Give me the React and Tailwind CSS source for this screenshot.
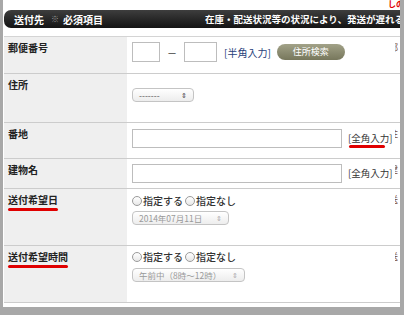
const jp = { fontFamily: '"Noto Sans CJK JP", "Noto Sans", sans-serif' };

function Radio({ label }) {
  return (
    <span className="flex items-center gap-[1px] whitespace-nowrap">
      <span className="inline-block w-[10px] h-[10px] rounded-full border border-[#9a9a9a] bg-gradient-to-b from-white to-[#e8e8e8]" />
      <span className="text-[10px] text-[#333] font-medium">{label}</span>
    </span>
  );
}

function Select({ width, children, muted }) {
  return (
    <div
      className={`flex items-center justify-between h-[14px] px-[6px] rounded-[4px] border border-[#c4c4c4] bg-gradient-to-b from-white to-[#ededed] whitespace-nowrap ${width}`}
    >
      <span className={`text-[8.5px] leading-none ${muted ? 'text-[#9a9a9a]' : 'text-[#555]'}`}>{children}</span>
      <span className={`text-[7px] leading-none ${muted ? 'text-[#aaa]' : 'text-[#444]'}`}>⇕</span>
    </div>
  );
}

function Edge({ ch }) {
  return (
    <div className="w-[5px] shrink-0 overflow-hidden pt-[6px]">
      <span className="block text-[9px] leading-[10px] text-[#7a4a30] -ml-[6px]">{ch}</span>
    </div>
  );
}

function Row({ label, underline, h, children, edge }) {
  return (
    <div className={`flex border-b border-[#cccccc] ${h}`}>
      <div className="w-[123px] shrink-0 bg-[#efefef] pl-[4px] pt-[5px]">
        <span className="block text-[10px] leading-[12px] text-[#222] font-semibold">{label}</span>
        {underline && <div className={`mt-[2px] h-[3px] rounded-full bg-[#e00000] ${underline}`} />}
      </div>
      <div className="flex-1 min-w-0 overflow-hidden pl-[5px]">{children}</div>
      <Edge ch={edge} />
    </div>
  );
}

export default function App() {
  return (
    <div className="w-[404px] h-[315px] bg-[#a8a8a8] pl-[3px] pr-[4px] pb-[8px] overflow-hidden" style={jp}>
      <div className="h-full bg-white overflow-hidden">
        <div className="flex justify-end h-[10px] overflow-hidden">
          <span className="text-[8px] leading-[8px] text-[#e00000] font-bold -mr-[4px] whitespace-nowrap">しの</span>
        </div>

        {/* header bar */}
        <div className="flex items-center h-[18px] rounded-l-[7px] bg-gradient-to-b from-[#3e3e3e] to-[#141414] ml-[1px] whitespace-nowrap overflow-hidden">
          <span className="pl-[10px] text-[10px] font-bold text-white">送付先</span>
          <span className="ml-[7px] text-[8px] text-[#9a9a9a]">※</span>
          <span className="ml-[4px] text-[10px] font-bold text-white">必須項目</span>
          <span className="ml-[102px] text-[9.5px] font-bold text-white">在庫・配送状況等の状況により、発送が遅れる場合があります</span>
        </div>

        <div className="mt-[8px] border-t border-[#d4d4d4] ml-[1px]">
          <Row label="郵便番号" h="h-[37px]" edge="郵">
            <div className="flex items-center pt-[5px] whitespace-nowrap">
              <div className="w-[28px] h-[20px] border border-[#bdbdbd]" />
              <span className="mx-[7px] text-[10px] text-[#333]">－</span>
              <div className="w-[33px] h-[20px] border border-[#bdbdbd]" />
              <span className="ml-[7px] text-[10px] text-[#27407a]">[半角入力]</span>
              <span className="ml-[6px] w-[68px] h-[16px] rounded-full bg-gradient-to-b from-[#a2a288] to-[#77775c] flex items-center justify-center text-[9px] text-white">
                住所検索
              </span>
            </div>
          </Row>
          <Row label="住所" h="h-[49px]" edge="">
            <div className="pt-[14px]">
              <Select width="w-[62px]">-------</Select>
            </div>
          </Row>
          <Row label="番地" h="h-[36px]" edge="住">
            <div className="flex items-center pt-[6px]">
              <div className="w-[210px] h-[19px] shrink-0 border border-[#bdbdbd]" />
              <div className="ml-[6px] flex flex-col whitespace-nowrap pt-[3px]">
                <span className="text-[9.5px] leading-[12px] text-[#333]">[全角入力]</span>
                <div className="mt-[1px] ml-[1px] w-[36px] h-[3px] rounded-full bg-[#e00000]" />
              </div>
            </div>
          </Row>
          <Row label="建物名" h="h-[30px]" edge="建">
            <div className="flex items-center pt-[5px]">
              <div className="w-[210px] h-[19px] shrink-0 border border-[#bdbdbd]" />
              <span className="ml-[6px] text-[9.5px] text-[#333] whitespace-nowrap">[全角入力]</span>
            </div>
          </Row>
          <Row label="送付希望日" underline="w-[50px]" h="h-[57px]" edge="送">
            <div className="flex gap-[2px] pt-[4px]">
              <Radio label="指定する" />
              <Radio label="指定なし" />
            </div>
            <div className="mt-[3px]">
              <Select width="w-[97px]" muted>2014年07月11日</Select>
            </div>
          </Row>
          <Row label="送付希望時間" underline="w-[60px]" h="h-[57px]" edge="送">
            <div className="flex gap-[2px] pt-[3px]">
              <Radio label="指定する" />
              <Radio label="指定なし" />
            </div>
            <div className="mt-[4px]">
              <Select width="w-[113px]" muted>午前中（8時〜12時）</Select>
            </div>
          </Row>
        </div>
      </div>
    </div>
  );
}
